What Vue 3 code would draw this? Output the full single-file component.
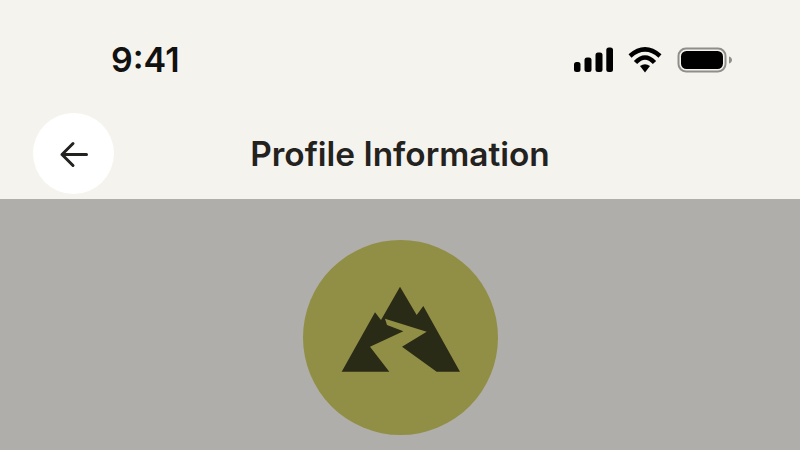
<template>
  <div class="screen">
    <header class="top">
      <div class="status">
        <span class="time">9:41</span>
        <div class="status__icons">
          <svg width="40" height="26" viewBox="0 0 40 26">
            <rect x="1" y="15" width="6.500" height="10" rx="2.500" />
            <rect x="11.500" y="10.500" width="7" height="14.500" rx="2.500" />
            <rect x="22.500" y="5.500" width="7" height="19.500" rx="2.500" />
            <rect x="33.300" y="0.500" width="6.700" height="24.500" rx="2.500" />
          </svg>
          <svg width="36" height="26" viewBox="0 0 36 26">
            <path d="M13 19Q18 15.500 23 19L18 25.500Z" />
            <path d="M8.500 15.500Q18 5.500 27.500 15.500" class="wave" />
            <path d="M3 9Q18 -4.200 33 9" class="wave" />
          </svg>
          <svg width="56" height="26" viewBox="0 0 56 26">
            <rect x="1.500" y="1.500" width="47" height="23" rx="7.500" class="shell" />
            <rect x="4" y="4" width="42" height="18" rx="5.500" />
            <path d="M52 9.500c2 .6 3 2 3 3.500s-1 2.900-3 3.500z" class="cap" />
          </svg>
        </div>
      </div>
      <div class="nav">
        <button class="back" type="button" aria-label="Back">
          <svg width="30" height="30" viewBox="0 0 30 30">
            <path d="M27.500 15.500H3M14 4.500L3 15.500 14 26.500" />
          </svg>
        </button>
        <h1 class="title">Profile Information</h1>
      </div>
    </header>
    <main class="content">
      <div class="avatar">
        <svg width="160" height="120" viewBox="0 0 480 360">
          <path d="M165 127L183 150L240 50L290 135L310 108L420 305H350L246 230L320 185L195 146L201 165L250 184L150 230L208 305H65Z" />
        </svg>
      </div>
    </main>
  </div>
</template>

<script setup>
</script>

<style>
html,
body {
  margin: 0;
  background: #b0aeaa;
}
</style>

<style scoped>
.screen {
  width: 800px;
  height: 450px;
  overflow: hidden;
  display: flex;
  flex-direction: column;
  font-family: Inter, "Liberation Sans", sans-serif;
}
.top {
  height: 199px;
  background: #f5f3ed;
  color: #23221e;
}
.status {
  height: 113px;
  box-sizing: border-box;
  padding: 6px 67px 0 111px;
  display: flex;
  align-items: center;
  justify-content: space-between;
}
.time {
  font-size: 34px;
  font-weight: 600;
  color: #111;
}
.status__icons {
  display: flex;
  align-items: center;
  gap: 14px;
}
.status__icons svg {
  display: block;
  overflow: visible;
  fill: #000;
}
.status__icons .wave {
  fill: none;
  stroke: #000;
  stroke-width: 4.500;
}
.status__icons .shell {
  fill: none;
  stroke: #8f8e8a;
  stroke-width: 2;
}
.status__icons .cap {
  fill: #8f8e8a;
}
.nav {
  position: relative;
  height: 81px;
  display: flex;
  align-items: center;
  justify-content: center;
}
.back {
  position: absolute;
  left: 33px;
  top: 0;
  width: 81px;
  height: 81px;
  padding: 0;
  border: none;
  border-radius: 50%;
  background: #fff;
  display: flex;
  align-items: center;
  justify-content: center;
}
.back svg {
  fill: none;
  stroke: #23221e;
  stroke-width: 3;
  stroke-linecap: round;
  stroke-linejoin: round;
}
.title {
  margin: 2px 0 0;
  font-size: 33.4px;
  font-weight: 600;
  line-height: 79px;
}
.content {
  flex: 1;
  background: #b0aeaa;
  padding-top: 41px;
  display: flex;
  justify-content: center;
  align-items: flex-start;
}
.avatar {
  width: 195px;
  height: 195px;
  border-radius: 50%;
  background: #908f45;
  display: flex;
  align-items: center;
  justify-content: center;
}
.avatar svg {
  display: block;
  margin-bottom: 16px;
  fill: #2a2b16;
}
</style>
